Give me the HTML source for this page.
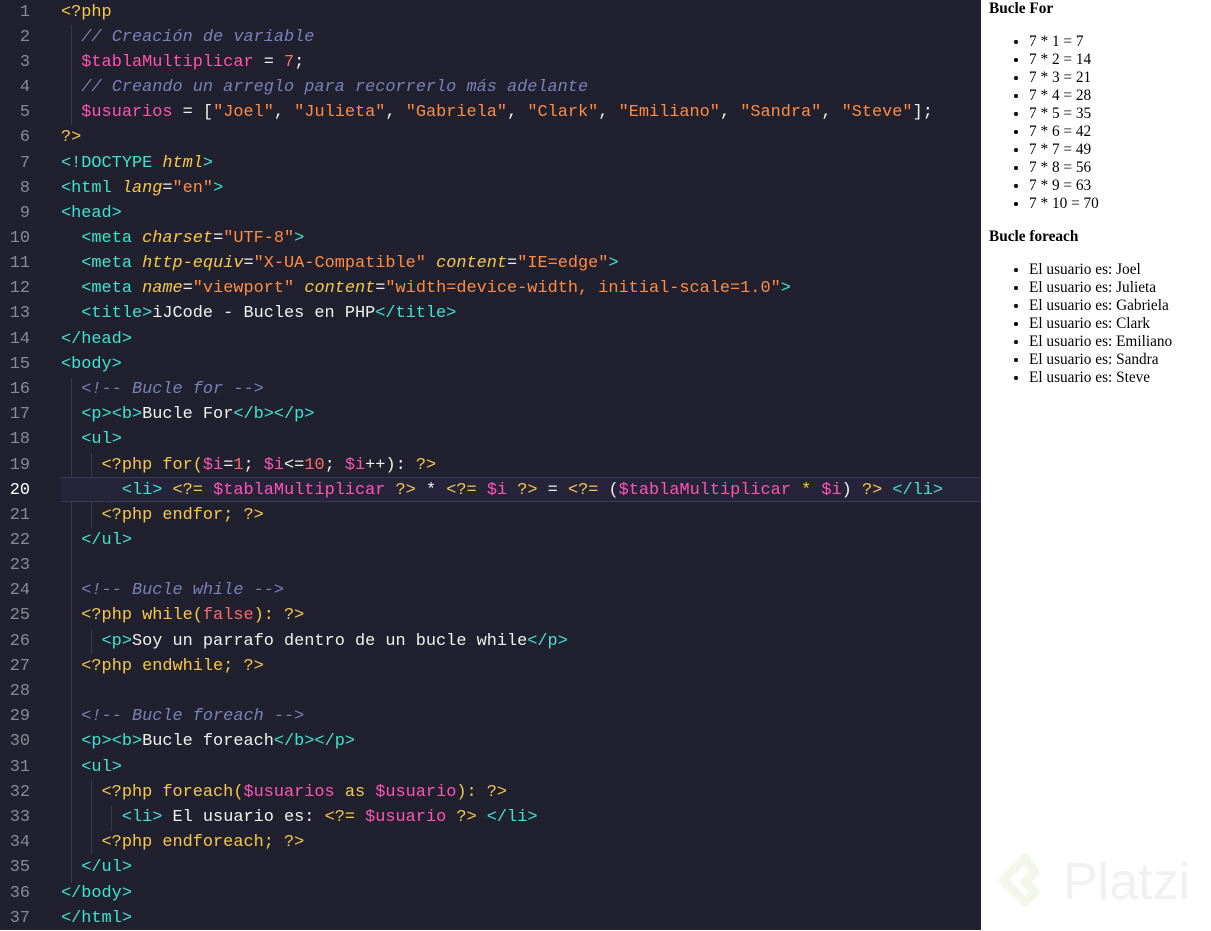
<!DOCTYPE html><html><head><meta charset="utf-8"><style>
body{margin:0;width:1211px;height:930px;overflow:hidden;background:#fff;position:relative}
#ed{position:absolute;left:0;top:0;width:981px;height:930px;background:#21202e;font-family:"Liberation Mono",monospace;font-size:16.9px;color:#f0f0f0}
.l{position:absolute;left:0;height:25px;line-height:25px;white-space:pre;width:981px}
.n{position:absolute;left:0;width:30px;text-align:right;color:#8a8a96}
.c{position:absolute;left:61px}
.t{color:#3fe3cf}.p{color:#f6c84c}.v{color:#ff55b0}.s{color:#ff8c42}.m{color:#ff6a6a}.k{color:#7c80b8;font-style:italic}.a{color:#f6c84c;font-style:italic}
.hl{background:#26243a;border-top:1px solid #3d3750;border-bottom:1px solid #3d3750;box-sizing:border-box}
.g{position:absolute;width:1px;background:#3a3948}
#out{position:absolute;left:989px;top:0;font-family:"Liberation Serif",serif;font-size:15.3px;color:#000;line-height:18px}
#out b{display:block;margin:0 0 15px}
#out ul{margin:0 0 15px;padding-left:40px}
</style></head><body>
<div id="ed">
<div class="g" style="left:71px;top:25px;height:100px"></div>
<div class="g" style="left:71px;top:378px;height:505px"></div>
<div class="g" style="left:91px;top:453px;height:75px"></div>
<div class="g" style="left:91px;top:630px;height:25px"></div>
<div class="g" style="left:91px;top:780px;height:75px"></div>
<div class="g" style="left:111px;top:478px;height:25px"></div>
<div class="g" style="left:111px;top:806px;height:25px"></div>
<div class="l" style="top:0"><span class="n">1</span><span class="c"><span class="p">&lt;?php</span></span></div>
<div class="l" style="top:25px"><span class="n">2</span><span class="c">  <span class="k">// Creación de variable</span></span></div>
<div class="l" style="top:50px"><span class="n">3</span><span class="c">  <span class="v">$tablaMultiplicar</span> = <span class="m">7</span>;</span></div>
<div class="l" style="top:75px"><span class="n">4</span><span class="c">  <span class="k">// Creando un arreglo para recorrerlo más adelante</span></span></div>
<div class="l" style="top:100px"><span class="n">5</span><span class="c">  <span class="v">$usuarios</span> = [<span class="s">"Joel"</span>, <span class="s">"Julieta"</span>, <span class="s">"Gabriela"</span>, <span class="s">"Clark"</span>, <span class="s">"Emiliano"</span>, <span class="s">"Sandra"</span>, <span class="s">"Steve"</span>];</span></div>
<div class="l" style="top:125px"><span class="n">6</span><span class="c"><span class="p">?&gt;</span></span></div>
<div class="l" style="top:151px"><span class="n">7</span><span class="c"><span class="t">&lt;!DOCTYPE </span><span class="a">html</span><span class="t">&gt;</span></span></div>
<div class="l" style="top:176px"><span class="n">8</span><span class="c"><span class="t">&lt;html </span><span class="a">lang</span>=<span class="s">"en"</span><span class="t">&gt;</span></span></div>
<div class="l" style="top:201px"><span class="n">9</span><span class="c"><span class="t">&lt;head&gt;</span></span></div>
<div class="l" style="top:226px"><span class="n">10</span><span class="c">  <span class="t">&lt;meta </span><span class="a">charset</span>=<span class="s">"UTF-8"</span><span class="t">&gt;</span></span></div>
<div class="l" style="top:251px"><span class="n">11</span><span class="c">  <span class="t">&lt;meta </span><span class="a">http-equiv</span>=<span class="s">"X-UA-Compatible"</span> <span class="a">content</span>=<span class="s">"IE=edge"</span><span class="t">&gt;</span></span></div>
<div class="l" style="top:276px"><span class="n">12</span><span class="c">  <span class="t">&lt;meta </span><span class="a">name</span>=<span class="s">"viewport"</span> <span class="a">content</span>=<span class="s">"width=device-width, initial-scale=1.0"</span><span class="t">&gt;</span></span></div>
<div class="l" style="top:301px"><span class="n">13</span><span class="c">  <span class="t">&lt;title&gt;</span>iJCode - Bucles en PHP<span class="t">&lt;/title&gt;</span></span></div>
<div class="l" style="top:327px"><span class="n">14</span><span class="c"><span class="t">&lt;/head&gt;</span></span></div>
<div class="l" style="top:352px"><span class="n">15</span><span class="c"><span class="t">&lt;body&gt;</span></span></div>
<div class="l" style="top:377px"><span class="n">16</span><span class="c">  <span class="k">&lt;!-- Bucle for --&gt;</span></span></div>
<div class="l" style="top:402px"><span class="n">17</span><span class="c">  <span class="t">&lt;p&gt;&lt;b&gt;</span>Bucle For<span class="t">&lt;/b&gt;&lt;/p&gt;</span></span></div>
<div class="l" style="top:427px"><span class="n">18</span><span class="c">  <span class="t">&lt;ul&gt;</span></span></div>
<div class="l" style="top:453px"><span class="n">19</span><span class="c">    <span class="p">&lt;?php for(</span><span class="v">$i</span>=<span class="m">1</span>; <span class="v">$i</span>&lt;=<span class="m">10</span>; <span class="v">$i</span>++): <span class="p">?&gt;</span></span></div>
<div class="l hl" style="top:477px;left:61px;width:920px"></div>
<div class="l" style="top:478px"><span class="n" style="color:#fff">20</span><span class="c">      <span class="t">&lt;li&gt;</span> <span class="p">&lt;?=</span> <span class="v">$tablaMultiplicar</span> <span class="p">?&gt;</span> * <span class="p">&lt;?=</span> <span class="v">$i</span> <span class="p">?&gt;</span> = <span class="p">&lt;?=</span> (<span class="v">$tablaMultiplicar</span> <span class="p">*</span> <span class="v">$i</span>) <span class="p">?&gt;</span> <span class="t">&lt;/li&gt;</span></span></div>
<div class="l" style="top:503px"><span class="n">21</span><span class="c">    <span class="p">&lt;?php endfor; ?&gt;</span></span></div>
<div class="l" style="top:528px"><span class="n">22</span><span class="c">  <span class="t">&lt;/ul&gt;</span></span></div>
<div class="l" style="top:553px"><span class="n">23</span></div>
<div class="l" style="top:578px"><span class="n">24</span><span class="c">  <span class="k">&lt;!-- Bucle while --&gt;</span></span></div>
<div class="l" style="top:603px"><span class="n">25</span><span class="c">  <span class="p">&lt;?php while(</span><span class="m">false</span><span class="p">): ?&gt;</span></span></div>
<div class="l" style="top:629px"><span class="n">26</span><span class="c">    <span class="t">&lt;p&gt;</span>Soy un parrafo dentro de un bucle while<span class="t">&lt;/p&gt;</span></span></div>
<div class="l" style="top:654px"><span class="n">27</span><span class="c">  <span class="p">&lt;?php endwhile; ?&gt;</span></span></div>
<div class="l" style="top:679px"><span class="n">28</span></div>
<div class="l" style="top:704px"><span class="n">29</span><span class="c">  <span class="k">&lt;!-- Bucle foreach --&gt;</span></span></div>
<div class="l" style="top:729px"><span class="n">30</span><span class="c">  <span class="t">&lt;p&gt;&lt;b&gt;</span>Bucle foreach<span class="t">&lt;/b&gt;&lt;/p&gt;</span></span></div>
<div class="l" style="top:755px"><span class="n">31</span><span class="c">  <span class="t">&lt;ul&gt;</span></span></div>
<div class="l" style="top:780px"><span class="n">32</span><span class="c">    <span class="p">&lt;?php foreach(</span><span class="v">$usuarios</span> <span class="p">as</span> <span class="v">$usuario</span><span class="p">): ?&gt;</span></span></div>
<div class="l" style="top:805px"><span class="n">33</span><span class="c">      <span class="t">&lt;li&gt;</span> El usuario es: <span class="p">&lt;?=</span> <span class="v">$usuario</span> <span class="p">?&gt;</span> <span class="t">&lt;/li&gt;</span></span></div>
<div class="l" style="top:830px"><span class="n">34</span><span class="c">    <span class="p">&lt;?php endforeach; ?&gt;</span></span></div>
<div class="l" style="top:855px"><span class="n">35</span><span class="c">  <span class="t">&lt;/ul&gt;</span></span></div>
<div class="l" style="top:881px"><span class="n">36</span><span class="c"><span class="t">&lt;/body&gt;</span></span></div>
<div class="l" style="top:906px"><span class="n">37</span><span class="c"><span class="t">&lt;/html&gt;</span></span></div>
</div>
<div id="out">
<b>Bucle For</b>
<ul><li>7 * 1 = 7</li><li>7 * 2 = 14</li><li>7 * 3 = 21</li><li>7 * 4 = 28</li><li>7 * 5 = 35</li><li>7 * 6 = 42</li><li>7 * 7 = 49</li><li>7 * 8 = 56</li><li>7 * 9 = 63</li><li>7 * 10 = 70</li></ul>
<b>Bucle foreach</b>
<ul><li>El usuario es: Joel</li><li>El usuario es: Julieta</li><li>El usuario es: Gabriela</li><li>El usuario es: Clark</li><li>El usuario es: Emiliano</li><li>El usuario es: Sandra</li><li>El usuario es: Steve</li></ul>
</div>
<svg style="position:absolute;left:995px;top:852px" width="60" height="60" viewBox="0 0 60 60"><path d="M30 6 L8 28 L30 50 L40 40 L30 30 L40 20 Z" fill="none" stroke="#f3f7ea" stroke-width="9" stroke-linejoin="round"/></svg>
<div style="position:absolute;left:1063px;top:852px;font-family:'Liberation Sans',sans-serif;font-size:52px;color:#f1f1f1">Platzi</div>
</body></html>
